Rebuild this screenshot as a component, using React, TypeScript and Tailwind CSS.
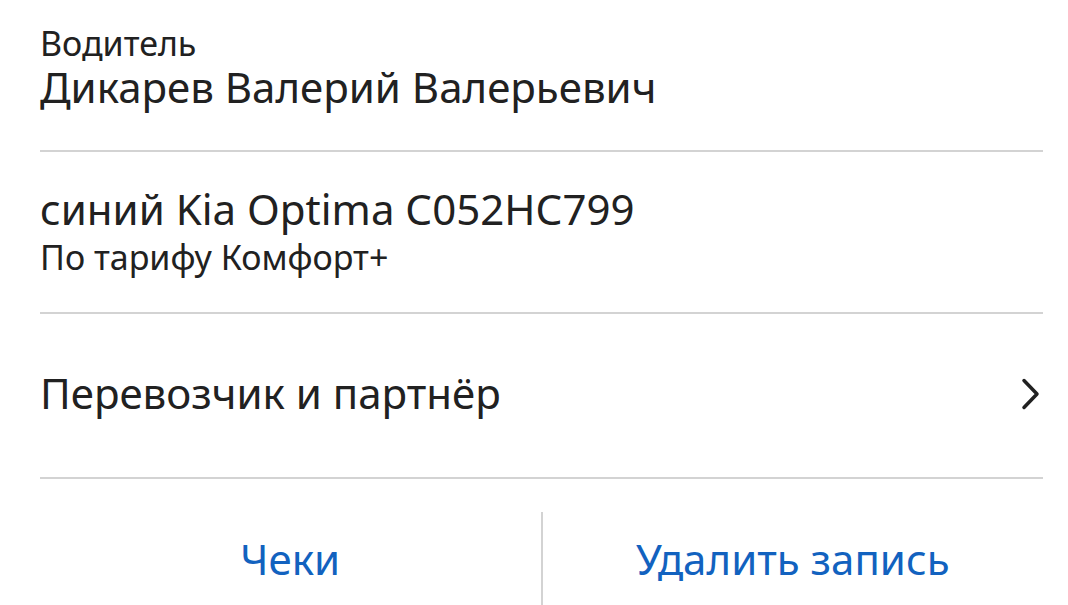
export default function App() {
  return (
    <div className="w-[1068px] h-[605px] overflow-hidden bg-white text-[#212121]" style={{ fontFamily: '"Noto Sans", Roboto, sans-serif' }}>
      <div className="pl-[40px] pr-[25px]">
        <div className="h-[152px] border-b-2 border-[#d3d3d3] pt-[24px]">
          <div className="text-[34px] leading-[38px]">Водитель</div>
          <div className="text-[42px] leading-[50px]">Дикарев Валерий Валерьевич</div>
        </div>
        <div className="h-[162px] border-b-2 border-[#d3d3d3] pt-[32px]">
          <div className="text-[42px] leading-[50px]">синий Kia Optima С052НС799</div>
          <div className="text-[34px] leading-[40px] mt-[3px]">По тарифу Комфорт+</div>
        </div>
        <div className="h-[165px] border-b-2 border-[#d3d3d3] flex items-center justify-between">
          <div className="text-[42px] leading-[50px] mb-[6px]">Перевозчик и партнёр</div>
          <svg width="22" height="34" viewBox="0 0 22 34" className="mr-[1px] mb-[4px]">
            <path d="M4 3.5 L17 17 L4 30.5" fill="none" stroke="#212121" strokeWidth="3.5" strokeLinecap="round" strokeLinejoin="round" />
          </svg>
        </div>
        <div className="flex pt-[33px] h-[126px]">
          <div className="flex-1 flex items-center justify-center text-[42px] leading-[50px] text-[#1262bf]">Чеки</div>
          <div className="w-[2px] bg-[#d3d3d3]" />
          <div className="flex-1 flex items-center justify-center text-[42px] leading-[50px] text-[#1262bf]">Удалить запись</div>
        </div>
      </div>
    </div>
  );
}
